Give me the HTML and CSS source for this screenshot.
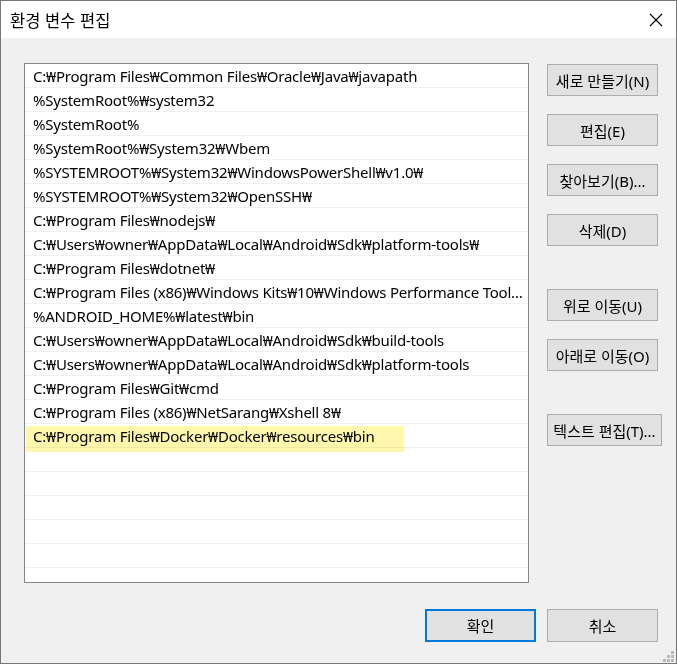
FILE: index.html
```html
<!DOCTYPE html>
<html lang="ko">
<head>
<meta charset="utf-8">
<link rel="stylesheet" href="styles.css">
</head>
<body>
<div class="window">
  <div class="titlebar">
    <span class="title">환경 변수 편집</span>
    <svg class="close" width="14" height="14" viewBox="0 0 14 14"><path d="M1 1L13 13M13 1L1 13" stroke="#000" stroke-width="1.1" fill="none"/></svg>
  </div>
  <div class="body">
    <div class="main">
      <div class="list">
        <div class="row"><span>C:₩Program Files₩Common Files₩Oracle₩Java₩javapath</span></div>
        <div class="row"><span>%SystemRoot%₩system32</span></div>
        <div class="row"><span>%SystemRoot%</span></div>
        <div class="row"><span>%SystemRoot%₩System32₩Wbem</span></div>
        <div class="row"><span>%SYSTEMROOT%₩System32₩WindowsPowerShell₩v1.0₩</span></div>
        <div class="row"><span>%SYSTEMROOT%₩System32₩OpenSSH₩</span></div>
        <div class="row"><span>C:₩Program Files₩nodejs₩</span></div>
        <div class="row"><span>C:₩Users₩owner₩AppData₩Local₩Android₩Sdk₩platform-tools₩</span></div>
        <div class="row"><span>C:₩Program Files₩dotnet₩</span></div>
        <div class="row"><span>C:₩Program Files (x86)₩Windows Kits₩10₩Windows Performance Toolkit₩</span></div>
        <div class="row"><span>%ANDROID_HOME%₩latest₩bin</span></div>
        <div class="row"><span>C:₩Users₩owner₩AppData₩Local₩Android₩Sdk₩build-tools</span></div>
        <div class="row"><span>C:₩Users₩owner₩AppData₩Local₩Android₩Sdk₩platform-tools</span></div>
        <div class="row"><span>C:₩Program Files₩Git₩cmd</span></div>
        <div class="row"><span>C:₩Program Files (x86)₩NetSarang₩Xshell 8₩</span></div>
        <div class="row hl-row"><span>C:₩Program Files₩Docker₩Docker₩resources₩bin</span><div class="highlight"></div></div>
        <div class="row"></div>
        <div class="row"></div>
        <div class="row"></div>
        <div class="row"></div>
        <div class="row"></div>
      </div>
      <div class="side">
        <button class="btn b1">새로 만들기(N)</button>
        <button class="btn">편집(E)</button>
        <button class="btn">찾아보기(B)...</button>
        <button class="btn">삭제(D)</button>
        <button class="btn gap">위로 이동(U)</button>
        <button class="btn">아래로 이동(O)</button>
        <button class="btn gap wide">텍스트 편집(T)...</button>
      </div>
    </div>
    <div class="footer">
      <button class="btn ok">확인</button>
      <button class="btn">취소</button>
    </div>
    <div class="grip">
      <i class="d1"></i><i class="d2"></i><i class="d3"></i><i class="d4"></i><i class="d5"></i><i class="d6"></i>
    </div>
  </div>
</div>
</body>
</html>
```
FILE: styles.css
```css
* { box-sizing: border-box; }
html, body { margin: 0; padding: 0; }
body {
  font-family: "Noto Sans", "Noto Sans CJK KR", sans-serif;
  font-size: 15px;
  color: #000;
  background: #fff;
}
.window {
  width: 677px;
  height: 664px;
  border: 1px solid #777;
  display: flex;
  flex-direction: column;
  background: #f0f0f0;
}
.titlebar {
  height: 37px;
  background: #fff;
  display: flex;
  align-items: center;
  justify-content: space-between;
  padding: 0 13px 0 9px;
}
.title {
  font-family: "Noto Sans CJK KR", sans-serif;
  font-size: 16.5px;
  line-height: 1;
  padding-top: 1px;
}
.close { display: block; }
.body {
  flex: 1;
  position: relative;
  padding: 25px 0 0 23px;
}
.main {
  display: flex;
  gap: 18px;
}
.list {
  width: 505px;
  height: 520px;
  border: 1px solid #828790;
  background: #fff;
  overflow: hidden;
}
.row {
  position: relative;
  height: 24px;
  border-bottom: 1px solid #f0f0f0;
  padding: 2px 4px 0 8px;
  display: flex;
  align-items: center;
  white-space: nowrap;
  overflow: hidden;
  letter-spacing: -0.22px;
}
.row span {
  overflow: hidden;
  text-overflow: ellipsis;
  line-height: 21px;
}
.highlight {
  position: absolute;
  left: 1px;
  top: 2px;
  width: 378px;
  height: 26px;
  background: #fff8ac;
  mix-blend-mode: multiply;
  pointer-events: none;
}
.hl-row { overflow: visible; }
.side {
  display: flex;
  flex-direction: column;
  gap: 18px;
  padding-top: 1px;
}
.btn {
  width: 111px;
  height: 32px;
  background: #e1e1e1;
  border: 1px solid #adadad;
  font-family: "Noto Sans", "Noto Sans CJK KR", sans-serif;
  font-size: 15px;
  color: #000;
  padding: 0;
  white-space: nowrap;
}
.btn.gap { margin-top: 25px; }
.btn.wide { width: 115px; }
.footer {
  display: flex;
  gap: 11px;
  padding: 26px 0 0 401px;
}
.footer .btn { height: 33px; }
.btn.ok { border: 2px solid #0078d7; }
.grip {
  position: absolute;
  right: 2px;
  bottom: 1px;
  width: 12px;
  height: 12px;
}
.grip i {
  position: absolute;
  width: 3px;
  height: 3px;
  background: #b9b9b9;
}
.grip .d1 { right: 0; bottom: 8px; }
.grip .d2 { right: 0; bottom: 4px; }
.grip .d3 { right: 4px; bottom: 4px; }
.grip .d4 { right: 0; bottom: 0; }
.grip .d5 { right: 4px; bottom: 0; }
.grip .d6 { right: 8px; bottom: 0; }
```
